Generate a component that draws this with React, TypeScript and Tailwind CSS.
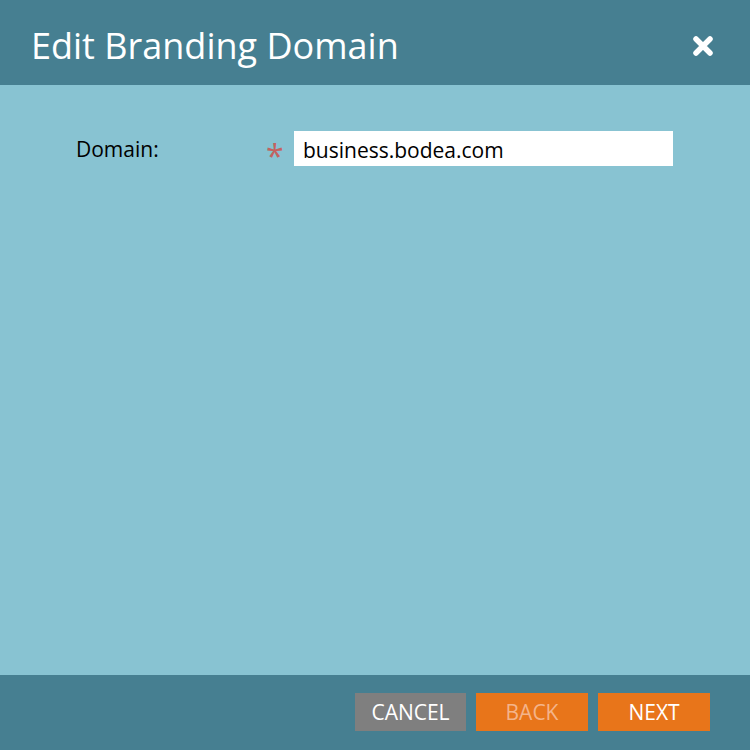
import React, { useState } from 'react';

export default function App() {
  const [domain, setDomain] = useState('business.bodea.com');

  return (
    <div className="h-[750px] w-[750px] flex flex-col bg-[#88c3d2] font-['Open_Sans',sans-serif]">
      {/* Title bar */}
      <div className="h-[85px] shrink-0 bg-[#467f91] flex items-center justify-between pl-[31px] pr-[36px]">
        <h1 className="text-[36px] text-white leading-none pt-[6px]">Edit Branding Domain</h1>
        <button className="w-[22px] h-[22px] mt-[6px] text-white" aria-label="Close">
          <svg viewBox="0 0 22 22" className="w-[22px] h-[22px]">
            <path d="M4 4 L18 18 M18 4 L4 18" stroke="white" strokeWidth="5.5" strokeLinecap="round" />
          </svg>
        </button>
      </div>

      {/* Form */}
      <div className="flex-1 pt-[46px]">
        <div className="flex items-center h-[35px]">
          <label className="block shrink-0 w-[266px] pl-[76px] pt-[3px] text-[21px] text-black">Domain:</label>
          <span className="block shrink-0 w-[28px] text-[32px] leading-none text-[#c26260] pt-[14px]">*</span>
          <input
            value={domain}
            onChange={(e) => setDomain(e.target.value)}
            className="w-[379px] h-[35px] bg-white px-[9px] pt-[3px] text-[21px] text-black outline-none"
          />
        </div>
      </div>

      {/* Footer */}
      <div className="h-[75px] shrink-0 bg-[#467f91] flex items-start justify-end gap-[10px] pt-[18px] pr-[40px]">
        <button className="w-[111px] h-[38px] pt-[1px] bg-[#7f7f7f] text-white text-[21px] uppercase">Cancel</button>
        <button className="w-[112px] h-[38px] pt-[1px] bg-[#e8751a] text-[#f4b48a] text-[21px] uppercase" disabled>Back</button>
        <button className="w-[112px] h-[38px] pt-[1px] bg-[#e8751a] text-white text-[21px] uppercase">Next</button>
      </div>
    </div>
  );
}
